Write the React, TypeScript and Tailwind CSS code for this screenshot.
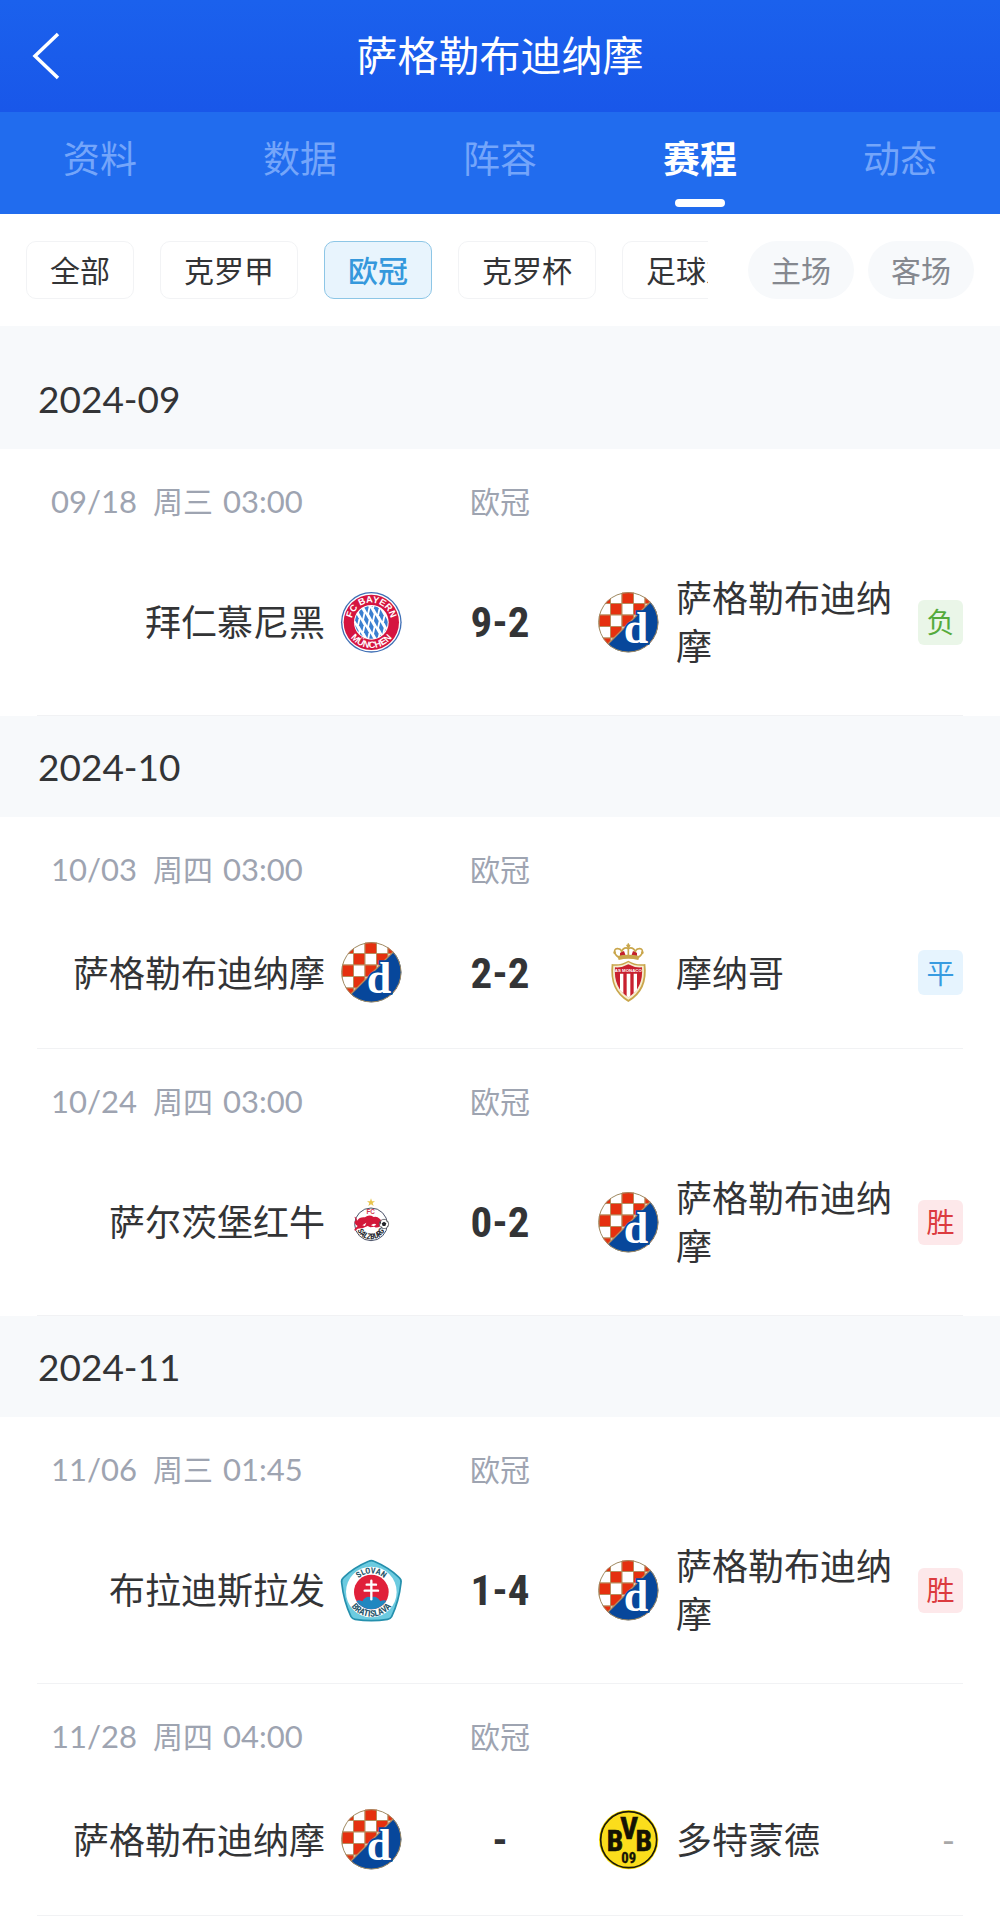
import React, { useState } from 'react';
import clsx from 'clsx';

type Team = 'bayern' | 'dinamo' | 'monaco' | 'salzburg' | 'slovan' | 'dortmund';
type Result = '胜' | '平' | '负' | '-';

interface Match {
  date: string;
  weekday: string;
  time: string;
  competition: string;
  home: Team;
  away: Team;
  score: string;
  result: Result;
}

interface MonthGroup {
  month: string;
  matches: Match[];
}

const teamNames: Record<Team, string> = {
  bayern: '拜仁慕尼黑',
  dinamo: '萨格勒布迪纳摩',
  monaco: '摩纳哥',
  salzburg: '萨尔茨堡红牛',
  slovan: '布拉迪斯拉发',
  dortmund: '多特蒙德',
};

const tabs = ['资料', '数据', '阵容', '赛程', '动态'];
const competitions = ['全部', '克罗甲', '欧冠', '克罗杯', '足球友谊'];
const venues = ['主场', '客场'];

const schedule: MonthGroup[] = [
  {
    month: '2024-09',
    matches: [
      { date: '09/18', weekday: '周三', time: '03:00', competition: '欧冠', home: 'bayern', away: 'dinamo', score: '9-2', result: '负' },
    ],
  },
  {
    month: '2024-10',
    matches: [
      { date: '10/03', weekday: '周四', time: '03:00', competition: '欧冠', home: 'dinamo', away: 'monaco', score: '2-2', result: '平' },
      { date: '10/24', weekday: '周四', time: '03:00', competition: '欧冠', home: 'salzburg', away: 'dinamo', score: '0-2', result: '胜' },
    ],
  },
  {
    month: '2024-11',
    matches: [
      { date: '11/06', weekday: '周三', time: '01:45', competition: '欧冠', home: 'slovan', away: 'dinamo', score: '1-4', result: '胜' },
      { date: '11/28', weekday: '周四', time: '04:00', competition: '欧冠', home: 'dinamo', away: 'dortmund', score: '-', result: '-' },
    ],
  },
];

const BayernCrest = ({ id }: { id: string }) => (
  <>
    <defs>
      <clipPath id={`${id}-core`}>
        <circle cx="91" cy="91" r="49" />
      </clipPath>
      <path id={`${id}-top`} d="M32 91 A59 59 0 0 1 150 91" />
      <path id={`${id}-bottom`} d="M14 91 A77 77 0 0 0 168 91" />
    </defs>
    <circle cx="91" cy="91" r="91" fill="#3f6fb5" />
    <circle cx="91" cy="91" r="87" fill="#fff" />
    <circle cx="91" cy="91" r="83" fill="#d5143f" />
    <circle cx="91" cy="91" r="52" fill="#fff" />
    <g clipPath={`url(#${id}-core)`} fill="#3a7fd0">
      {[0, 1, 2, 3, 4, 5, 6, 7, 8].map((col) =>
        [0, 1, 2, 3].map((row) => {
          const x = 31 + col * 15;
          const y = 20 + row * 38 + (col % 2) * 19 + col * 2;
          return <path key={`${col}-${row}`} d={`M${x - 3} ${y - 18} L${x + 7} ${y} L${x + 3} ${y + 18} L${x - 7} ${y} Z`} />;
        })
      )}
    </g>
    <g fill="#fff" fontFamily="'Liberation Sans', sans-serif" fontWeight="700" fontSize="28" textAnchor="middle">
      <text>
        <textPath href={`#${id}-top`} startOffset="50%">FC BAYERN</textPath>
      </text>
      <text>
        <textPath href={`#${id}-bottom`} startOffset="50%">MÜNCHEN</textPath>
      </text>
    </g>
  </>
);

const DinamoCrest = ({ id }: { id: string }) => (
  <>
    <defs>
      <clipPath id={`${id}-disc`}>
        <circle cx="91" cy="91" r="90" />
      </clipPath>
    </defs>
    <g clipPath={`url(#${id}-disc)`}>
      <rect width="183" height="183" fill="#fff" />
      {[0, 1, 2, 3, 4].map((row) =>
        [0, 1, 2, 3, 4].map((col) => (
          <rect
            key={`${row}-${col}`}
            x={3 + col * 34.5}
            y={row * 34.5}
            width="34.5"
            height="34.5"
            fill={(row + col) % 2 === 0 ? '#e5300f' : '#fff'}
            stroke="#b98a5c"
            strokeWidth="3"
          />
        ))
      )}
      <path d="M10 176 L176 10 L200 10 L200 200 L10 200 Z" fill="#07479b" />
      <path d="M20 166 L166 20" stroke="#b98a5c" strokeWidth="4" />
    </g>
    <circle cx="91" cy="91" r="89" fill="none" stroke="#a08a62" strokeWidth="3" />
    <text
      x="114"
      y="154"
      textAnchor="middle"
      fontFamily="'Liberation Serif', serif"
      fontWeight="700"
      fontSize="132"
      fill="#fff"
      stroke="#07479b"
      strokeWidth="10"
      paintOrder="stroke"
    >
      d
    </text>
  </>
);

const MonacoCrest = () => (
  <>
    <g fill="none" stroke="#c9a64c" strokeWidth="5">
      <path d="M62 46 C44 34 48 18 60 20 C70 20 74 30 72 42" />
      <path d="M121 46 C139 34 135 18 123 20 C113 20 109 30 111 42" />
      <path d="M72 40 C66 22 82 14 91 20 C100 14 117 22 111 40" />
      <path d="M91 4 V20 M85 10 H97" strokeWidth="4" />
      <path d="M91 20 V44" />
    </g>
    <path d="M66 33 L78 27 L84 44 L66 44 Z M117 33 L105 27 L99 44 L117 44 Z" fill="#c4202c" />
    <path d="M58 42 Q91 34 125 42 L121 54 Q91 46 62 54 Z" fill="#c9a64c" />
    <g fill="#c9a64c">
      <circle cx="50" cy="32" r="4" />
      <circle cx="133" cy="32" r="4" />
      <circle cx="91" cy="12" r="5" />
    </g>
    <path d="M41 66 Q68 70 91 56 Q114 70 142 66 Q152 146 91 180 Q32 146 41 66 Z" fill="#c9a64c" />
    <path d="M46 71 Q70 74 91 61 Q112 74 137 71 Q144 142 91 173 Q38 142 46 71 Z" fill="#f6edd0" />
    <path d="M51 76 Q72 78 91 67 Q110 78 132 76 Q137 138 91 166 Q46 138 51 76 Z" fill="#c8202f" />
    <path d="M66 95 H76 V154 Q70 149 66 144 Z M86 95 H97 V163 L91 166 L86 163 Z M107 95 H117 V144 Q112 150 107 154 Z" fill="#fff" />
    <text x="91" y="90" textAnchor="middle" fontFamily="'Liberation Sans', sans-serif" fontWeight="700" fontSize="13" fill="#fff">
      AS MONACO
    </text>
  </>
);

const SalzburgCrest = ({ id }: { id: string }) => (
  <>
    <defs>
      <path id={`${id}-arc`} d="M45 97 A45 45 0 0 0 135 97" />
    </defs>
    <path d="M90 19 L93 28 L102 28 L95 33 L98 42 L90 37 L82 42 L85 33 L78 28 L87 28 Z" fill="#e9c54d" />
    <circle cx="90" cy="97" r="49" fill="#fff" stroke="#4a5168" strokeWidth="3" />
    <text x="89" y="67" textAnchor="middle" fontFamily="'Liberation Sans', sans-serif" fontWeight="700" fontSize="19" fill="#d1364c">
      FC
    </text>
    <path
      d="M40 74 Q48 76 48 86 Q56 74 72 76 Q84 66 98 75 Q108 72 116 80 L122 86 L117 89 Q122 96 117 103 Q108 110 100 104 L88 106 L80 102 L66 108 L50 110 L42 117 L40 112 L50 102 L44 98 L40 90 L45 84 Z"
      fill="#d3183a"
    />
    <path d="M64 100 L76 92 L72 102 Z M90 100 Q98 92 106 98 L98 103 Z" fill="#fff" />
    <circle cx="129" cy="96" r="14" fill="#fff" stroke="#30333b" strokeWidth="2" />
    <path d="M129 89 L136 94 L133 102 L125 102 L122 94 Z M116 91 L121 86 L118 98 Z M137 85 L142 93 L136 88 Z M138 106 L141 100 L142 103 Z M120 106 L126 109 L121 103 Z" fill="#22242a" />
    <text fontFamily="'Roboto Condensed', 'Liberation Sans', sans-serif" fontWeight="700" fontStyle="italic" fontSize="24" fill="#23262d" textAnchor="middle">
      <textPath href={`#${id}-arc`} startOffset="50%">SALZBURG</textPath>
    </text>
  </>
);

const SlovanCrest = ({ id }: { id: string }) => (
  <>
    <defs>
      <path id={`${id}-top`} d="M35 96 A56 56 0 0 1 147 96" />
      <path id={`${id}-bottom`} d="M17 96 A74 74 0 0 0 165 96" />
      <clipPath id={`${id}-red`}>
        <circle cx="91" cy="96" r="52" />
      </clipPath>
    </defs>
    <path
      d="M83 4 Q91 0 99 4 Q142 22 174 52 Q182 59 180 68 Q174 124 152 170 Q148 177 140 178 Q91 186 42 178 Q34 177 30 170 Q8 124 2 68 Q0 59 8 52 Q40 22 83 4 Z"
      fill="#6ccbe0"
      stroke="#2590ad"
      strokeWidth="5"
      strokeLinejoin="round"
    />
    <circle cx="91" cy="96" r="76" fill="#fff" />
    <circle cx="91" cy="96" r="52" fill="#e0203a" />
    <g clipPath={`url(#${id}-red)`}>
      <path d="M36 132 Q48 114 64 124 Q74 106 91 112 Q108 106 118 124 Q134 114 148 132 V150 H36 Z" fill="#2087c0" />
    </g>
    <g stroke="#fff" strokeWidth="7" strokeLinecap="round">
      <path d="M91 62 V118" />
      <path d="M77 74 H105" />
      <path d="M71 92 H111" />
    </g>
    <g fontFamily="'Roboto Condensed', 'Liberation Sans', sans-serif" fontWeight="700" fill="#27566b" textAnchor="middle">
      <text fontSize="25">
        <textPath href={`#${id}-top`} startOffset="50%">SLOVAN</textPath>
      </text>
      <text fontSize="27">
        <textPath href={`#${id}-bottom`} startOffset="50%">BRATISLAVA</textPath>
      </text>
    </g>
  </>
);

const DortmundCrest = () => (
  <>
    <circle cx="92" cy="92" r="89" fill="#fde100" />
    <circle cx="92" cy="92" r="84" fill="#fbdd1c" stroke="#1c1a0a" strokeWidth="5" />
    <g fontFamily="'Roboto Condensed', 'Liberation Sans', sans-serif" fontWeight="700" fill="#141204" stroke="#141204" strokeWidth="2" textAnchor="middle">
      <text x="51" y="125" fontSize="88">B</text>
      <text x="93" y="91" fontSize="92">V</text>
      <text x="137" y="125" fontSize="88">B</text>
      <text x="92" y="161" fontSize="44" strokeWidth="1">09</text>
    </g>
  </>
);

const Crest = ({ team, id }: { team: Team; id: string }) => (
  <svg viewBox="0 0 183 183" className="size-[61px] shrink-0 overflow-visible" role="img" aria-label={teamNames[team]}>
    {team === 'bayern' && <BayernCrest id={id} />}
    {team === 'dinamo' && <DinamoCrest id={id} />}
    {team === 'monaco' && <MonacoCrest />}
    {team === 'salzburg' && <SalzburgCrest id={id} />}
    {team === 'slovan' && <SlovanCrest id={id} />}
    {team === 'dortmund' && <DortmundCrest />}
  </svg>
);

const resultStyles: Record<Result, string> = {
  胜: 'bg-[#fde8ea] text-[#dc3b3f]',
  平: 'bg-[#e6f4fe] text-[#389be0]',
  负: 'bg-[#eaf6e8] text-[#55ab3c]',
  '-': 'text-[#a8a8a8]',
};

const MatchRow = ({ match }: { match: Match }) => {
  const id = match.date.replace('/', '');

  return (
    <li className="mx-[37px] border-b border-[#f1f2f4] pt-8 pb-[45px]">
      <div className="grid grid-cols-[1fr_196px_1fr] items-center text-[30px] leading-10 text-[#9ea4b1]">
        <div className="flex pl-[14px]">
          <span className="mr-4 text-[31px]">{match.date}</span>
          <span className="mr-[10px]">{match.weekday}</span>
          <span className="text-[31px]">{match.time}</span>
        </div>
        <span className="text-center">{match.competition}</span>
      </div>

      <div className="mt-[53px] grid grid-cols-[1fr_196px_1fr] items-center">
        {/* Home */}
        <div className="flex items-center justify-end gap-4">
          <span className="text-right text-4xl leading-12">{teamNames[match.home]}</span>
          <Crest team={match.home} id={`h${id}`} />
        </div>

        <span className="text-center font-['Roboto_Condensed',sans-serif] text-[43px] leading-12 font-bold">
          {match.score}
        </span>

        {/* Away */}
        <div className="flex items-center">
          <Crest team={match.away} id={`a${id}`} />
          <span className="mr-3 ml-[17px] flex-1 text-4xl leading-12">{teamNames[match.away]}</span>
          <span
            className={clsx(
              'flex h-[45px] shrink-0 items-center rounded-md',
              match.result === '-' ? 'justify-end pr-2 text-4xl' : 'w-[45px] justify-center text-[28px]',
              resultStyles[match.result]
            )}
          >
            {match.result}
          </span>
        </div>
      </div>
    </li>
  );
};

export default function App() {
  const [activeTab, setActiveTab] = useState('赛程');
  const [competition, setCompetition] = useState('欧冠');
  const [venue, setVenue] = useState<string | null>(null);

  return (
    <div className="min-h-screen bg-white font-['Lato','Noto_Sans_CJK_SC',sans-serif] text-[#333436]">
      <header>
        <div className="grid h-28 grid-cols-[100px_1fr_100px] items-center bg-linear-to-b from-[#1b61ed] to-[#1957e9] text-white">
          <button type="button" aria-label="返回" className="flex h-full items-center pl-8">
            <svg width="30" height="48" viewBox="0 0 30 48" fill="none" stroke="currentColor" strokeWidth="3.5">
              <path d="M26 2 L3 24 L26 46" />
            </svg>
          </button>
          <h1 className="text-center text-[41px] leading-14">{teamNames.dinamo}</h1>
        </div>

        <nav className="grid grid-cols-5 bg-[#216cee]">
          {tabs.map((tab) => (
            <button
              key={tab}
              type="button"
              onClick={() => setActiveTab(tab)}
              className={clsx(
                'flex flex-col items-center pt-[23px] pb-[7px] text-[37px] leading-12',
                tab === activeTab ? 'font-bold text-white' : 'text-[#74a5fa]'
              )}
            >
              {tab}
              <span className={clsx('mt-4 h-2 w-[50px] rounded-full', tab === activeTab && 'bg-white')} />
            </button>
          ))}
        </nav>
      </header>

      <div className="flex gap-10 px-[26px] py-[27px] text-[30px] leading-10">
        <div className="flex min-w-0 flex-1 gap-[26px] overflow-hidden">
          {competitions.map((name) => (
            <button
              key={name}
              type="button"
              onClick={() => setCompetition(name)}
              className={clsx(
                'h-[58px] shrink-0 rounded-[10px] border px-[23px]',
                name === competition ? 'border-[#8dc6e6] bg-[#e8f4fd] font-medium text-[#3598dc]' : 'border-[#f2f3f5]'
              )}
            >
              {name}
            </button>
          ))}
        </div>
        <div className="flex shrink-0 gap-[14px]">
          {venues.map((name) => (
            <button
              key={name}
              type="button"
              onClick={() => setVenue(name === venue ? null : name)}
              className={clsx('h-[58px] rounded-full bg-[#f7f9fb] px-[23px]', name === venue ? 'text-[#3598dc]' : 'text-[#85888f]')}
            >
              {name}
            </button>
          ))}
        </div>
      </div>

      <main className="bg-[#f7f9fb] pt-[22px]">
        {schedule.map((group) => (
          <section key={group.month}>
            <h2 className="px-[38px] pt-[31px] pb-[30px] text-[37px] leading-10">{group.month}</h2>
            <ul className="bg-white">
              {group.matches.map((match) => (
                <MatchRow key={match.date} match={match} />
              ))}
            </ul>
          </section>
        ))}
      </main>
    </div>
  );
}
